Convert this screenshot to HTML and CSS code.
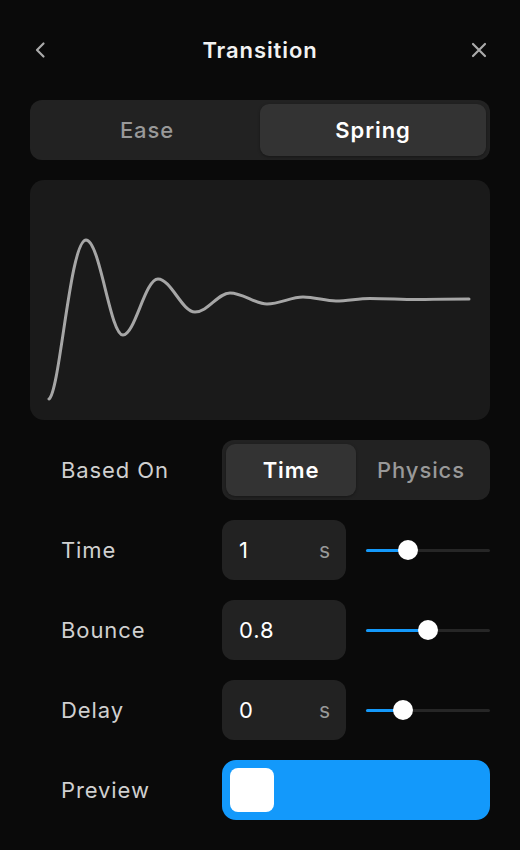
FILE: index.html
```html
<!DOCTYPE html>
<html>
<head>
<meta charset="utf-8">
<link rel="stylesheet" href="styles.css">
</head>
<body>
<div class="panel">
  <header class="head">
    <svg class="icon" width="20" height="20" viewBox="0 0 20 20"><path d="M12.5 3.5 L6 10 L12.5 16.5" fill="none" stroke="#aaa" stroke-width="2.2" stroke-linecap="round" stroke-linejoin="round"/></svg>
    <h1 class="title">Transition</h1>
    <svg class="icon" width="20" height="20" viewBox="0 0 20 20"><path d="M4 4 L16 16 M16 4 L4 16" fill="none" stroke="#aaa" stroke-width="2.2" stroke-linecap="round"/></svg>
  </header>

  <div class="seg big">
    <div class="opt">Ease</div>
    <div class="opt active">Spring</div>
  </div>

  <div class="graph">
    <svg width="460" height="240" viewBox="0 0 460 240">
      <path d="M19 219 C 30 212, 40 60, 56 60 C 70 60, 80 155, 93 155 C 105 155, 115 99, 128 99 C 141 99, 152 132, 165 132 C 178 132, 188 113, 200 113 C 213 113, 225 124, 237 124 C 250 124, 261 117, 273 117 C 285 117, 295 121, 306 121 C 318 121, 328 118.5, 340 118.5 C 360 118.5, 375 120, 395 119.5 C 410 119, 425 119, 439 119" fill="none" stroke="#a6a6a6" stroke-width="3" stroke-linecap="round"/>
    </svg>
  </div>

  <div class="rows">
    <div class="row">
      <div class="label">Based On</div>
      <div class="seg small">
        <div class="opt active">Time</div>
        <div class="opt">Physics</div>
      </div>
    </div>
    <div class="row">
      <div class="label">Time</div>
      <div class="ctrl">
        <div class="field"><span class="val">1</span><span class="unit">s</span></div>
        <div class="slider"><div class="fill" style="width:42px"></div><div class="knob" style="left:42px"></div></div>
      </div>
    </div>
    <div class="row">
      <div class="label">Bounce</div>
      <div class="ctrl">
        <div class="field"><span class="val">0.8</span></div>
        <div class="slider"><div class="fill" style="width:62px"></div><div class="knob" style="left:62px"></div></div>
      </div>
    </div>
    <div class="row">
      <div class="label">Delay</div>
      <div class="ctrl">
        <div class="field"><span class="val">0</span><span class="unit">s</span></div>
        <div class="slider"><div class="fill" style="width:37px"></div><div class="knob" style="left:37px"></div></div>
      </div>
    </div>
    <div class="row">
      <div class="label">Preview</div>
      <div class="preview"><div class="box"></div></div>
    </div>
  </div>
</div>
</body>
</html>
```

FILE: styles.css
```css
* { box-sizing: border-box; }
html, body { margin: 0; padding: 0; }
body {
  background: #0a0a0a;
  width: 520px;
  height: 850px;
  font-family: Inter, "Noto Sans", sans-serif;
  color: #fff;
  overflow: hidden;
}
.panel {
  padding: 30px 30px 0 30px;
}
.head {
  display: flex;
  align-items: center;
  justify-content: space-between;
  height: 40px;
}
.head .icon { display: block; }
.head .icon:first-child { margin-left: 1px; }
.head .icon:last-child { margin-right: 1px; }
.title {
  margin: 0;
  font-size: 22px;
  font-weight: 600;
  color: #f2f2f2;
  letter-spacing: 0.9px;
}
.seg {
  display: flex;
  background: #222;
  border-radius: 12px;
  padding: 4px;
}
.seg.big {
  margin-top: 30px;
  height: 60px;
}
.seg .opt {
  flex: 1;
  display: flex;
  align-items: center;
  justify-content: center;
  color: #999;
  font-size: 22px;
  font-weight: 500;
  letter-spacing: 0.9px;
  border-radius: 9px;
}
.seg .opt.active {
  background: #333;
  color: #fff;
  font-weight: 600;
  box-shadow: 0 1px 3px rgba(0,0,0,0.35);
}
.graph {
  margin-top: 20px;
  height: 240px;
  background: #1a1a1a;
  border-radius: 14px;
  overflow: hidden;
}
.graph svg { display: block; }
.rows {
  margin-top: 20px;
  display: flex;
  flex-direction: column;
  gap: 20px;
}
.row {
  display: grid;
  grid-template-columns: 192px 1fr;
  height: 60px;
  align-items: center;
}
.label {
  padding-left: 31px;
  font-size: 22px;
  letter-spacing: 0.9px;
  color: #d0d0d0;
}
.seg.small {
  height: 60px;
}
.ctrl {
  display: flex;
  align-items: center;
  gap: 20px;
  height: 60px;
}
.field {
  width: 124px;
  height: 60px;
  background: #222;
  border-radius: 12px;
  display: flex;
  align-items: center;
  justify-content: space-between;
  padding: 0 16px 0 17px;
}
.val { font-size: 22px; letter-spacing: 0.9px; color: #fff; }
.unit { font-size: 21px; color: #999; }
.slider {
  position: relative;
  flex: 1;
  height: 3px;
  background: #262626;
  border-radius: 2px;
}
.fill {
  position: absolute;
  left: 0; top: 0; bottom: 0;
  background: #1499fa;
  border-radius: 2px;
}
.knob {
  position: absolute;
  top: 50%;
  width: 20px;
  height: 20px;
  margin-left: -10px;
  margin-top: -10px;
  background: #fff;
  border-radius: 50%;
}
.preview {
  height: 60px;
  background: #1399fb;
  border-radius: 14px;
  padding: 8px;
}
.box {
  width: 44px;
  height: 44px;
  background: #fff;
  border-radius: 8px;
}
```
